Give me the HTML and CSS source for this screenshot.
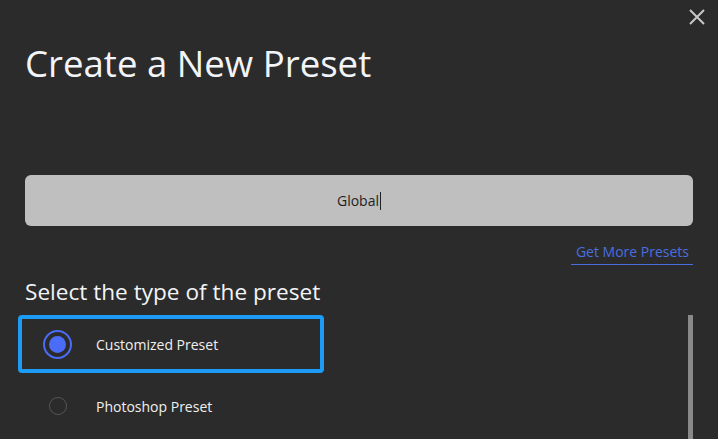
FILE: index.html
```html
<!DOCTYPE html>
<html>
<head>
<meta charset="utf-8">
<link rel="stylesheet" href="styles.css">
</head>
<body>
<div class="dialog">
  <button class="close" aria-label="Close">
    <svg width="16" height="16" viewBox="0 0 16 16"><path d="M1 1L15 15M15 1L1 15" stroke="#c8c8c8" stroke-width="2" fill="none"/></svg>
  </button>
  <h1 class="title">Create a New Preset</h1>
  <div class="name-field">
    <span class="name-value">Global</span><span class="caret"></span>
  </div>
  <div class="link-row">
    <a class="more-link" href="#">Get More Presets</a>
  </div>
  <h2 class="section-title">Select the type of the preset</h2>
  <div class="list-row">
    <div class="options">
      <div class="option selected">
        <span class="radio on"><span class="dot"></span></span>
        <span class="option-label">Customized Preset</span>
      </div>
      <div class="option">
        <span class="radio"></span>
        <span class="option-label">Photoshop Preset</span>
      </div>
    </div>
    <div class="scrollbar"></div>
  </div>
</div>
</body>
</html>
```
FILE: styles.css
```css
html, body {
  margin: 0;
  padding: 0;
  background: #2b2b2b;
}
.dialog {
  position: relative;
  width: 718px;
  height: 439px;
  overflow: hidden;
  box-sizing: border-box;
  padding: 0 25px;
  background: #2b2b2b;
  font-family: "Open Sans", "Noto Sans", sans-serif;
  color: #f0f0f0;
  display: flex;
  flex-direction: column;
}
.close {
  position: absolute;
  top: 9px;
  right: 13px;
  width: 16px;
  height: 16px;
  padding: 0;
  border: 0;
  background: none;
  display: flex;
}
.title {
  margin: 40px 0 0 0;
  font-size: 36.6px;
  font-weight: 400;
  line-height: 46px;
  color: #f2f4f7;
}
.name-field {
  margin-top: 89px;
  height: 51px;
  border-radius: 6px;
  background: #bfbfbf;
  display: flex;
  align-items: center;
  justify-content: center;
  color: #1e1e1e;
  font-size: 14px;
}
.caret {
  width: 1px;
  height: 18px;
  background: #222;
  margin-left: 1px;
}
.link-row {
  display: flex;
  justify-content: flex-end;
  margin-top: 16px;
}
.more-link {
  color: #4a6ee0;
  font-size: 14px;
  text-decoration: none;
  line-height: 20px;
  padding: 0 4px 2px 5px;
  border-bottom: 1px solid #4a6ee0;
}
.section-title {
  margin: 12px 0 0 0;
  font-size: 22.6px;
  font-weight: 400;
  line-height: 30px;
  color: #f2f4f7;
}
.list-row {
  display: flex;
  justify-content: space-between;
  margin-top: 8px;
  flex: 1;
}
.options {
  margin-left: -7px;
  display: flex;
  flex-direction: column;
  gap: 4px;
}
.option {
  width: 306px;
  height: 58px;
  box-sizing: border-box;
  display: flex;
  align-items: center;
  padding-left: 21px;
  border: 4px solid transparent;
  border-radius: 4px;
  font-size: 14px;
  color: #f0f0f0;
}
.option.selected {
  border-color: #1e9bf5;
}
.radio {
  width: 18px;
  height: 18px;
  box-sizing: border-box;
  border: 1px solid #555;
  border-radius: 50%;
  margin: 0 29px 0 6px;
  display: flex;
  align-items: center;
  justify-content: center;
  flex-shrink: 0;
}
.radio.on {
  width: 29px;
  height: 29px;
  margin: 0 24px 0 0;
  border: 2px solid #4a6cf7;
}
.dot {
  width: 17px;
  height: 17px;
  border-radius: 50%;
  background: #4a6cf7;
}
.scrollbar {
  width: 5px;
  background: #898989;
}
```
